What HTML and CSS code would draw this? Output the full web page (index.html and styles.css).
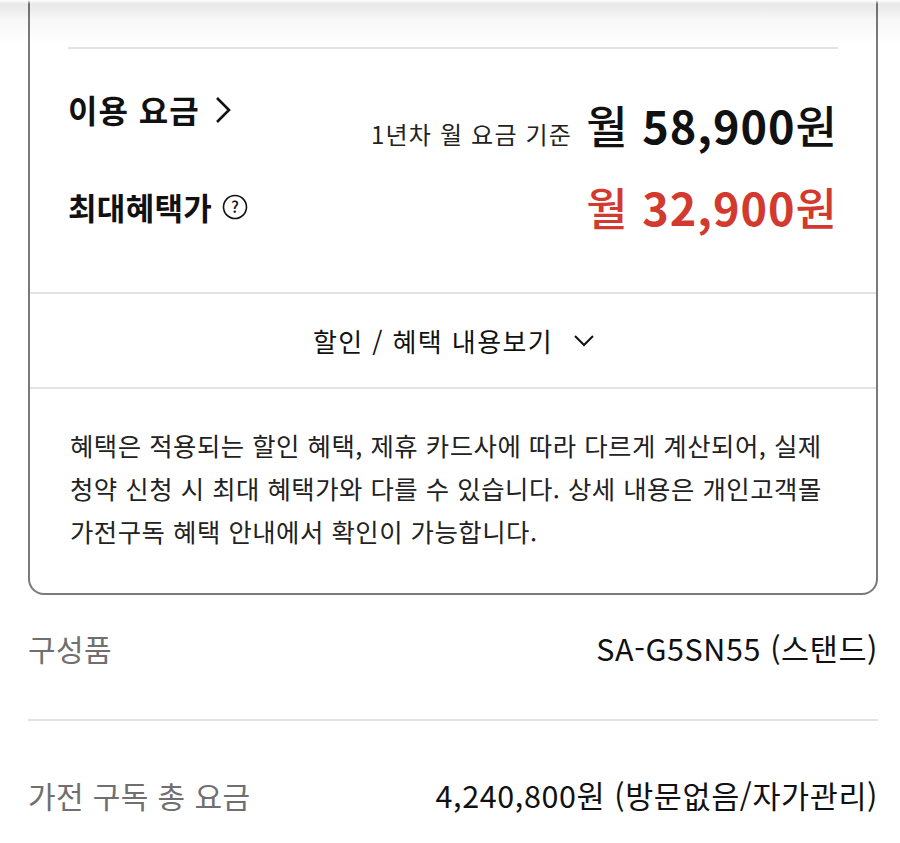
FILE: index.html
```html
<!DOCTYPE html>
<html lang="ko">
<head>
<meta charset="utf-8">
<title>가전 구독</title>
<link rel="stylesheet" href="styles.css">
</head>
<body>
<div class="top-shadow"></div>
<main class="page">
  <section class="card">
    <div class="price-block">
      <div class="row row-fee">
        <a class="label" href="#">이용 요금
          <svg class="chev-right" width="16" height="28" viewBox="0 0 16 28" aria-hidden="true"><path d="M2 2 L14 14 L2 26" fill="none" stroke="#111" stroke-width="2.6"/></svg>
        </a>
        <div class="amount">
          <span class="basis">1년차 월 요금 기준</span>
          <span class="price"><span class="unit">월</span> <b>58,900</b><span class="unit">원</span></span>
        </div>
      </div>
      <div class="row row-benefit">
        <div class="label">최대혜택가
          <svg class="help" width="26" height="26" viewBox="0 0 26 26" aria-hidden="true"><circle cx="13" cy="13" r="11.5" fill="none" stroke="#111" stroke-width="1.6"/><text x="13" y="19" text-anchor="middle" font-size="16" font-weight="500" font-family="Noto Sans CJK KR, sans-serif" fill="#111">?</text></svg>
        </div>
        <div class="price price-red"><span class="unit">월</span> <b>32,900</b><span class="unit">원</span></div>
      </div>
    </div>
    <button class="toggle" type="button">할인 / 혜택 내용보기
      <svg class="chev-down" width="22" height="14" viewBox="0 0 22 14" aria-hidden="true"><path d="M2 2 L11 11 L20 2" fill="none" stroke="#111" stroke-width="2"/></svg>
    </button>
    <p class="notice">혜택은 적용되는 할인 혜택, 제휴 카드사에 따라 다르게 계산되어, 실제<br>청약 신청 시 최대 혜택가와 다를 수 있습니다. 상세 내용은 개인고객몰<br>가전구독 혜택 안내에서 확인이 가능합니다.</p>
  </section>
  <dl class="specs">
    <div class="spec">
      <dt>구성품</dt>
      <dd>SA-G5SN55 (스탠드)</dd>
    </div>
    <div class="spec">
      <dt>가전 구독 총 요금</dt>
      <dd>4,240,800원 (방문없음/자가관리)</dd>
    </div>
  </dl>
</main>
</body>
</html>
```

FILE: styles.css
```css
* { box-sizing: border-box; }
html, body { margin: 0; padding: 0; background: #fff; }
body {
  font-family: "Noto Sans CJK KR", "Noto Sans", sans-serif;
  color: #111;
  overflow: hidden;
}
.top-shadow {
  position: absolute;
  left: 0; right: 0; top: 0;
  height: 44px;
  pointer-events: none;
  background: linear-gradient(to bottom, rgba(255,255,255,1) 0, rgba(0,0,0,0.09) 4px, rgba(0,0,0,0.03) 20px, rgba(0,0,0,0) 44px);
  z-index: 5;
}
.page {
  padding: 0 22px 0 28px;
}
.card {
  border: 2px solid #7a7a7a;
  border-top: none;
  border-radius: 0 0 16px 16px;
  padding-top: 47px;
}
.price-block {
  margin: 0 38px;
  border-top: 2px solid #e3e3e3;
  padding: 40px 0 57px;
}
.row {
  display: flex;
  justify-content: space-between;
  align-items: flex-start;
}
.label {
  display: flex;
  align-items: center;
  gap: 15px;
  font-size: 32px;
  font-weight: 700;
  line-height: 40px;
  color: #111;
  text-decoration: none;
  letter-spacing: 1px;
}
.chev-right { margin-top: 2px; }
.amount {
  display: flex;
  align-items: baseline;
  gap: 14px;
  margin-top: 8px;
}
.basis {
  font-size: 24px;
  color: #222;
  letter-spacing: 1.2px;
}
.price {
  font-size: 45px;
  line-height: 56px;
  letter-spacing: 1px;
  white-space: nowrap;
}
.price b { font-weight: 700; }
.price .unit { font-weight: 500; }
.row-benefit { margin-top: 26px; align-items: center; }
.row-benefit .label { gap: 10px; font-size: 31px; letter-spacing: 0.3px; }
.price-red { color: #d33a2f; }
.toggle {
  display: flex;
  width: 100%;
  justify-content: center;
  align-items: center;
  gap: 20px;
  height: 97px;
  border: none;
  border-top: 2px solid #e3e3e3;
  border-bottom: 2px solid #e3e3e3;
  background: transparent;
  font-family: inherit;
  font-size: 26px;
  color: #111;
  padding: 0 0 0 2px;
  letter-spacing: 1.4px;
}
.notice {
  margin: 0;
  padding: 35px 0 40px 40px;
  font-size: 25.4px;
  line-height: 43px;
  color: #222;
  letter-spacing: 0.5px;
  white-space: nowrap;
}
.specs { margin: 0; }
.spec {
  display: flex;
  justify-content: space-between;
  align-items: center;
  padding: 54px 0 49px;
  font-size: 30px;
  line-height: 40px;
  letter-spacing: 0.4px;
}
.spec:first-child {
  padding-top: 33px;
  border-bottom: 2px solid #e3e3e3;
  padding-bottom: 51px;
}
.spec dt { color: #6f6f6f; }
.spec dd { margin: 0; color: #111; font-size: 30.5px; letter-spacing: 0.6px; }
```
